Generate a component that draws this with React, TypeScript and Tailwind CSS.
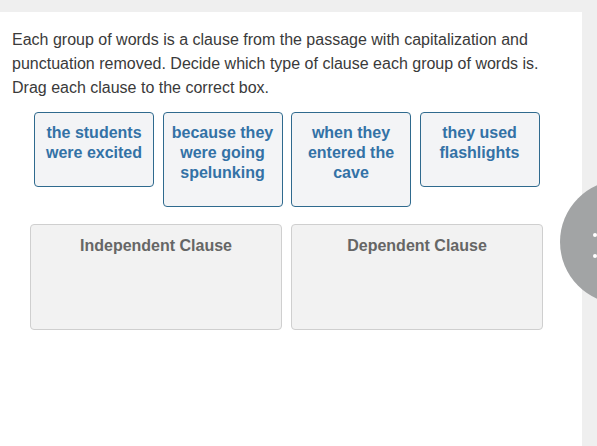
const clauses = [
  'the students were excited',
  'because they were going spelunking',
  'when they entered the cave',
  'they used flashlights',
]

const zones = ['Independent Clause', 'Dependent Clause']

export default function App() {
  return (
    <div className="relative h-[446px] w-[597px] overflow-hidden bg-[#efefef] pt-3 font-['Liberation_Sans',Arial,sans-serif]">
      <div className="h-full w-[582px] bg-white pt-[16px]">
        <p className="pl-3 pr-4 text-[16px] leading-[24px] text-[#3a3a3a]">
          Each group of words is a clause from the passage with capitalization and punctuation removed. Decide which type
          of clause each group of words is. Drag each clause to the correct box.
        </p>

        <div className="mt-[12px] flex items-start gap-[8.5px] pl-[34px]">
          {clauses.map((c) => (
            <div
              key={c}
              className="w-[120px] rounded-[4px] border border-[#2f6a8e] bg-[#f3f4f6] px-1 pt-[10px] pb-[23px] text-center text-[16px] font-bold leading-[20px] text-[#3372a6]"
            >
              {c}
            </div>
          ))}
        </div>

        <div className="mt-[17px] flex gap-[9px] pl-[30px]">
          {zones.map((z) => (
            <div
              key={z}
              className="h-[106px] w-[252px] rounded-[4px] border border-[#cfcfcf] bg-[#f2f2f2] pt-[11px] text-center text-[16px] font-bold leading-[20px] text-[#666]"
            >
              {z}
            </div>
          ))}
        </div>
      </div>

      <div className="absolute left-[560px] top-[180px] h-[124px] w-[124px] rounded-full bg-[#a2a4a5]">
        <div className="absolute left-[33px] top-[53px] h-[4px] w-[4px] rounded-full bg-white" />
        <div className="absolute left-[33px] top-[74px] h-[4px] w-[4px] rounded-full bg-white" />
      </div>
    </div>
  )
}
